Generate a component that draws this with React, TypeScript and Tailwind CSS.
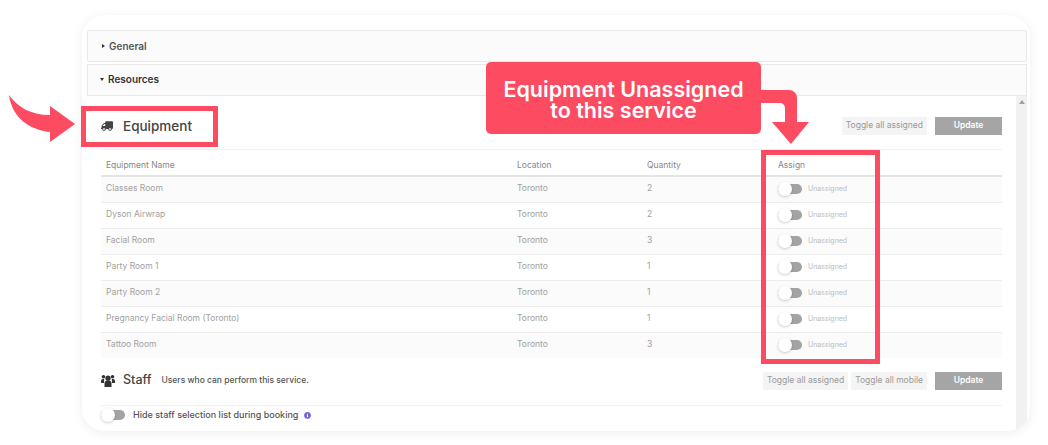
import * as React from 'react'
import { FaTruck, FaInfoCircle } from 'react-icons/fa'

const rows = [
	{ name: 'Classes Room', qty: 2 },
	{ name: 'Dyson Airwrap', qty: 2 },
	{ name: 'Facial Room', qty: 3 },
	{ name: 'Party Room 1', qty: 1 },
	{ name: 'Party Room 2', qty: 1 },
	{ name: 'Pregnancy Facial Room (Toronto)', qty: 1 },
	{ name: 'Tattoo Room', qty: 3 },
]

const Toggle = () => (
	<div className="relative h-[10px] w-[24px] shrink-0 rounded-full bg-[#a3a3a3]">
		<div className="absolute left-0 top-[-2px] size-[14px] rounded-full bg-white shadow-[0_1px_3px_rgba(0,0,0,0.2)]" />
	</div>
)

const GreyButton = ({ children }: { children: React.ReactNode }) => (
	<div className="flex h-[18px] items-center justify-center bg-[#f4f4f4] px-[4px] text-[8.5px] text-[#999]">
		{children}
	</div>
)

const UpdateButton = () => (
	<div className="ml-[8px] flex h-[18px] w-[67px] items-center justify-center bg-[#a5a5a5] text-[8.5px] font-semibold text-white">
		Update
	</div>
)

const UsersIcon = () => (
	<svg className="shrink-0" width="14" height="14" viewBox="0 0 14 14" fill="#333">
		<circle cx="7" cy="4.200" r="2.600" />
		<circle cx="2.500" cy="2.800" r="1.800" />
		<circle cx="11.500" cy="2.800" r="1.800" />
		<path d="M3.500 13V9.500a3 3 0 0 1 3-3h1a3 3 0 0 1 3 3V13Z" />
		<path d="M0 9V7a2 2 0 0 1 2-2h1.200L3 8.500V9Z" />
		<path d="M14 9V7a2 2 0 0 0-2-2h-1.200L11 8.500V9Z" />
	</svg>
)

const App = () => {
	return (
		<div className="relative h-[445px] w-[1048px] overflow-hidden bg-white pl-[82px] pt-[15px] font-['Inter',sans-serif]">
			<div className="h-[416px] w-[948px] overflow-hidden rounded-[22px] bg-white pl-[5px] pr-[3px] pt-[15px] shadow-[0_2px_12px_rgba(0,0,0,0.07)]">
				<div className="flex h-[32px] items-center rounded-[2px] border border-[#e8e8e8] bg-[#fbfbfb] pl-[14px] text-[10px] font-semibold text-[#555]">
					<span className="mr-[4px] h-0 w-0 border-y-[2.5px] border-l-[3px] border-y-transparent border-l-[#333]" />
					General
				</div>
				<div className="mt-[2px] flex h-[32px] items-center border border-[#e8e8e8] bg-[#fbfbfb] pb-[1px] pl-[12px] text-[10px] font-semibold text-[#333]">
					<span className="mr-[4px] h-0 w-0 border-x-[2.5px] border-t-[3px] border-x-transparent border-t-[#333]" />
					Resources
				</div>
				<div className="flex h-[340px]">
					<div className="w-[929px] pl-[14px] pr-[14px]">
						<div className="flex h-[53px] items-center justify-between pt-[6px]">
							<div className="flex items-center">
								<FaTruck className="size-[12px] -scale-x-100 text-[#444]" />
								<span className="ml-[10px] pt-[2px] text-[13.5px] font-medium text-[#444]">Equipment</span>
							</div>
							<div className="flex">
								<GreyButton>Toggle all assigned</GreyButton>
								<UpdateButton />
							</div>
						</div>
						<div className="flex h-[28px] items-center border-y border-t-[#f1f1f1] border-b-[#e4e4e4] border-b-2 pl-[5px] pt-[5px] text-[8.5px] text-[#888]">
							<div className="w-[411px]">Equipment Name</div>
							<div className="w-[130px]">Location</div>
							<div className="w-[131px]">Quantity</div>
							<div>Assign</div>
						</div>
						{rows.map((row, i) => (
							<div
								key={row.name}
								className={`flex items-center pb-[2px] pl-[5px] text-[8.5px] text-[#a0a0a0] ${i % 2 === 0 ? 'bg-[#fbfbfb]' : 'bg-white'} ${i === rows.length - 1 ? 'h-[25px]' : 'h-[26px] border-b border-[#ececec]'}`}
							>
								<div className="w-[411px]">{row.name}</div>
								<div className="w-[130px]">Toronto</div>
								<div className="w-[131px]">{row.qty}</div>
								<div className="flex items-center">
									<Toggle />
									<span className="ml-[6px] pt-[1px] text-[7px] text-[#bbb]">Unassigned</span>
								</div>
							</div>
						))}
						<div className="flex h-[48px] items-center justify-between border-b border-[#f1f1f1] pb-[2px]">
							<div className="flex items-center">
								<UsersIcon />
								<span className="ml-[8px] text-[12.5px] font-medium text-[#444]">Staff</span>
								<span className="ml-[10px] text-[8.5px] font-medium text-[#555]">
									Users who can perform this service.
								</span>
							</div>
							<div className="flex">
								<GreyButton>Toggle all assigned</GreyButton>
								<div className="w-[3px]" />
								<GreyButton>Toggle all mobile</GreyButton>
								<UpdateButton />
							</div>
						</div>
						<div className="flex h-[18px] items-center">
							<Toggle />
							<span className="ml-[8px] text-[9px] font-medium text-[#555]">
								Hide staff selection list during booking
							</span>
							<FaInfoCircle className="ml-[6px] size-[7px] text-[#6c63d8]" />
						</div>
					</div>
					<div className="flex w-[11px] justify-center bg-[#f1f1f1] pt-[4px]">
						<span className="h-0 w-0 border-x-[3px] border-b-[4px] border-x-transparent border-b-[#a0a0a0]" />
					</div>
				</div>
			</div>

			{/* annotations */}
			<div className="absolute left-[81px] top-[106px] h-[41px] w-[137px] border-[5px] border-[#fd4b62]" />
			<div className="absolute left-[761px] top-[150px] h-[214px] w-[119px] border-[5px] border-[#fd4b62]" />
			<div className="absolute left-[486px] top-[62px] flex h-[72px] w-[275px] flex-col items-center justify-center rounded-[5px] bg-[#fd4b62] pt-[3px] text-[21.5px] font-semibold leading-[21px] text-white">
				<span>Equipment Unassigned</span>
				<span>to this service</span>
			</div>
			<svg className="absolute left-[750px] top-[85px]" width="64" height="64" viewBox="0 0 64 64">
				<path d="M5 5H39a8 8 0 0 1 8 8V37H59L41 59 22 37H35V23a5 5 0 0 0-5-5H5Z" fill="#fd4b62" />
			</svg>
			<svg className="absolute left-0 top-[90px]" width="80" height="60" viewBox="0 0 80 60">
				<path d="M9 5C18 18 32 25 50 25V16L75 34 50 52V42C30 40 12 28 9 5Z" fill="#fd4b62" />
			</svg>
		</div>
	)
}

export default App
